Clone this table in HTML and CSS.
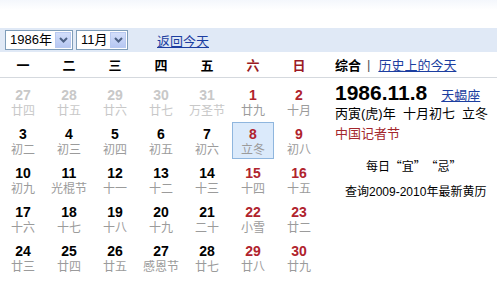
FILE: index.html
```html
<!DOCTYPE html>
<html>
<head>
<meta charset="utf-8">
<link rel="stylesheet" href="styles.css">
</head>
<body>
<div class="top"></div>
<div class="toolbar">
  <div class="sel sel-year"><span class="sel-text">1986年</span><span class="sel-btn"><svg width="9" height="6" viewBox="0 0 9 6"><path d="M1 1 L4.5 4.5 L8 1" fill="none" stroke="#4d6185" stroke-width="2"/></svg></span></div>
  <div class="sel sel-month"><span class="sel-text">11月</span><span class="sel-btn"><svg width="9" height="6" viewBox="0 0 9 6"><path d="M1 1 L4.5 4.5 L8 1" fill="none" stroke="#4d6185" stroke-width="2"/></svg></span></div>
  <a class="link today">返回今天</a>
</div>
<div class="main">
  <div class="cal">
    <div class="week">
      <span>一</span><span>二</span><span>三</span><span>四</span><span>五</span><span class="we">六</span><span class="we">日</span>
    </div>
    <div class="days">
      <div class="d other"><b>27</b><i>廿四</i></div>
      <div class="d other"><b>28</b><i>廿五</i></div>
      <div class="d other"><b>29</b><i>廿六</i></div>
      <div class="d other"><b>30</b><i>廿七</i></div>
      <div class="d other"><b>31</b><i>万圣节</i></div>
      <div class="d red"><b>1</b><i>廿九</i></div>
      <div class="d red"><b>2</b><i>十月</i></div>

      <div class="d"><b>3</b><i>初二</i></div>
      <div class="d"><b>4</b><i>初三</i></div>
      <div class="d"><b>5</b><i>初四</i></div>
      <div class="d"><b>6</b><i>初五</i></div>
      <div class="d"><b>7</b><i>初六</i></div>
      <div class="d red sel-day"><b>8</b><i>立冬</i></div>
      <div class="d red"><b>9</b><i>初八</i></div>

      <div class="d"><b>10</b><i>初九</i></div>
      <div class="d"><b>11</b><i>光棍节</i></div>
      <div class="d"><b>12</b><i>十一</i></div>
      <div class="d"><b>13</b><i>十二</i></div>
      <div class="d"><b>14</b><i>十三</i></div>
      <div class="d red"><b>15</b><i>十四</i></div>
      <div class="d red"><b>16</b><i>十五</i></div>

      <div class="d"><b>17</b><i>十六</i></div>
      <div class="d"><b>18</b><i>十七</i></div>
      <div class="d"><b>19</b><i>十八</i></div>
      <div class="d"><b>20</b><i>十九</i></div>
      <div class="d"><b>21</b><i>二十</i></div>
      <div class="d red"><b>22</b><i>小雪</i></div>
      <div class="d red"><b>23</b><i>廿二</i></div>

      <div class="d"><b>24</b><i>廿三</i></div>
      <div class="d"><b>25</b><i>廿四</i></div>
      <div class="d"><b>26</b><i>廿五</i></div>
      <div class="d"><b>27</b><i>感恩节</i></div>
      <div class="d"><b>28</b><i>廿七</i></div>
      <div class="d red"><b>29</b><i>廿八</i></div>
      <div class="d red"><b>30</b><i>廿九</i></div>
    </div>
  </div>
  <div class="side">
    <div class="tabs"><b>综合</b><span class="bar">|</span><a class="link">历史上的今天</a></div>
    <div class="info">
      <div class="date"><span class="big">1986.11.8</span><a class="link star">天蝎座</a></div>
      <div class="lunar">丙寅(虎)年&nbsp; 十月初七&nbsp; 立冬</div>
      <div class="fest">中国记者节</div>
      <div class="yi" lang="zh-CN">每日 “宜” “忌”</div>
      <div class="query">查询2009-2010年最新黄历</div>
    </div>
  </div>
</div>
</body>
</html>
```
FILE: styles.css
```css
* { box-sizing: border-box; }
html, body { margin: 0; padding: 0; background: #fff; }
body {
  width: 497px;
  height: 289px;
  overflow: hidden;
  font-family: "Liberation Sans", "Noto Sans CJK SC", sans-serif;
  font-size: 13px;
  color: #000;
}
.top {
  height: 28px;
  background: linear-gradient(#f4f7fc, #fff 10px);
}
.toolbar {
  height: 24px;
  background: #e0e9f6;
  display: flex;
  align-items: center;
  padding-left: 5px;
}
.sel {
  height: 20px;
  border: 1px solid #7f9db9;
  background: #fff;
  display: flex;
  align-items: stretch;
  margin-right: 3px;
}
.sel-year { width: 68px; }
.sel-month { width: 52px; }
.sel-text {
  flex: 1;
  font-size: 13px;
  line-height: 18px;
  padding-left: 4px;
}
.sel-btn {
  width: 16px;
  margin: 1px;
  background: linear-gradient(#d3defa, #b6c7f2);
  border: 1px solid #b8c9f0;
  display: flex;
  align-items: center;
  justify-content: center;
}
.link {
  color: #1c3ea0;
  text-decoration: underline;
  cursor: pointer;
}
.today { margin-left: 26px; font-size: 13px; }
.main {
  display: flex;
}
.cal { width: 322px; }
.week {
  display: grid;
  grid-template-columns: repeat(7, 46px);
  height: 26px;
  border-bottom: 1px solid #d5d9de;
  align-items: center;
  font-weight: bold;
  font-size: 13px;
}
.week span { text-align: center; }
.week .we { color: #9a1a24; }
.days {
  display: grid;
  grid-template-columns: repeat(7, 46px);
  grid-auto-rows: 39px;
  padding-top: 4px;
}
.d {
  margin: 1px;
  padding-top: 3px;
  display: flex;
  flex-direction: column;
  align-items: center;
  border: 1px solid transparent;
}
.d b {
  font-size: 14px;
  line-height: 17px;
  font-weight: bold;
}
.d i {
  font-style: normal;
  font-size: 12px;
  line-height: 15px;
  color: #9b9b9b;
}
.d.other b, .d.other i { color: #c8c8c8; }
.d.red b { color: #b0232d; }
.sel-day {
  margin: 1px 2px;
  background: #dbeafb;
  border-color: #8fb6de;
}
.side { flex: 1; }
.tabs {
  height: 26px;
  border-bottom: 1px solid #d5d9de;
  display: flex;
  align-items: center;
  padding-left: 13px;
  font-size: 13px;
}
.tabs b { font-weight: bold; }
.bar { color: #555; margin: 0 8px 0 6px; }
.info { padding-left: 13px; padding-top: 2px; }
.date {
  display: flex;
  align-items: baseline;
  height: 24px;
}
.big {
  font-size: 21px;
  font-weight: bold;
  line-height: 26px;
}
.star { margin-left: 14px; font-size: 13px; }
.lunar { font-size: 13px; line-height: 20px; }
.fest { font-size: 13px; line-height: 20px; color: #a3262c; }
.yi {
  font-family: "Noto Sans CJK SC", sans-serif;
  font-size: 12px;
  line-height: 18px;
  margin-top: 13px;
  padding-left: 31px;
  word-spacing: -3px;
}
.query {
  font-size: 12px;
  line-height: 18px;
  margin-top: 8px;
  padding-left: 10px;
}
```
